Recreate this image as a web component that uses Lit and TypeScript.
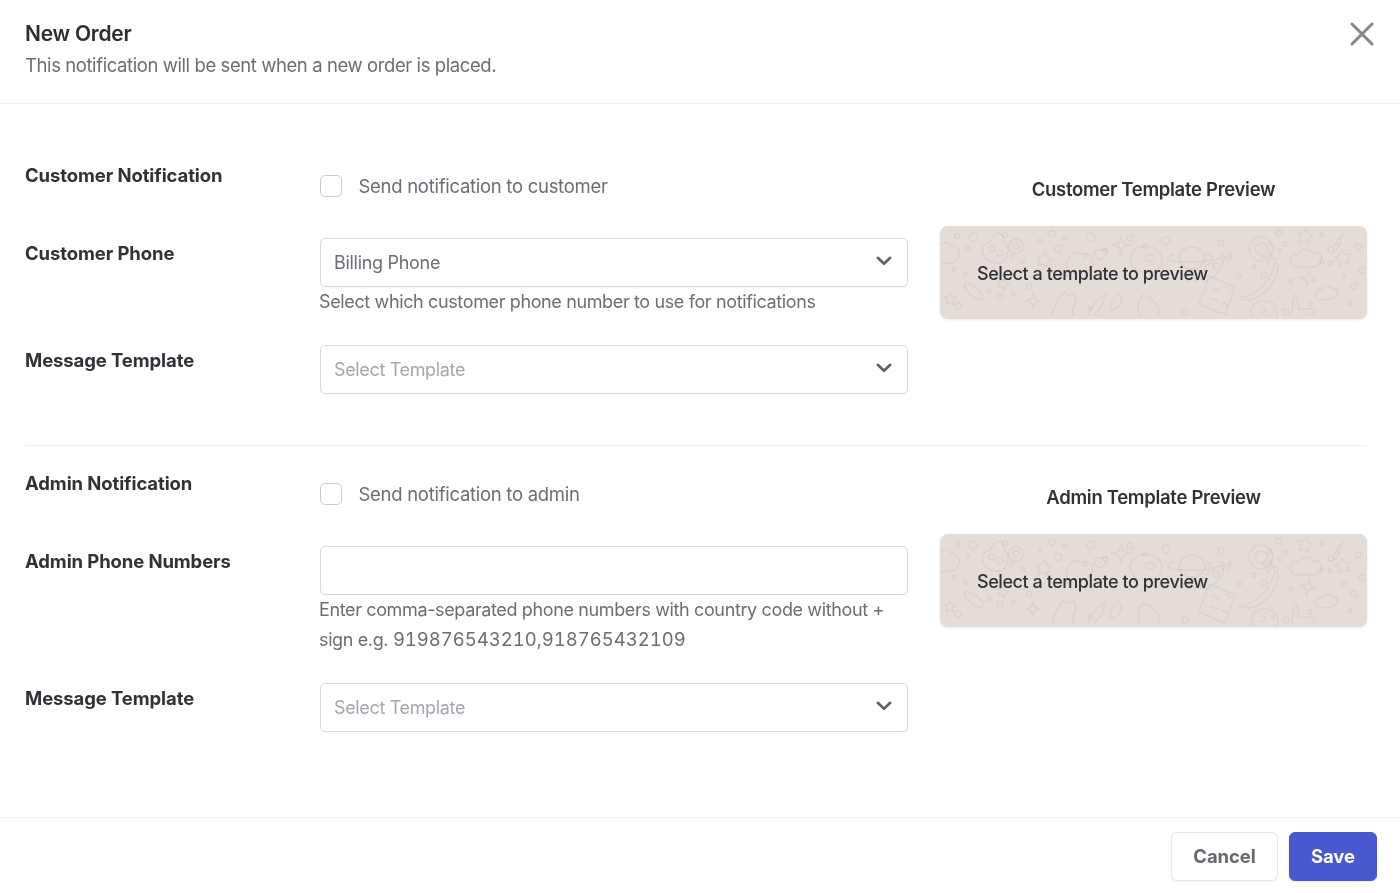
import { LitElement, html, css, svg } from "lit";
import { customElement } from "lit/decorators.js";

const circles: [number, number, number][] = [
  [17,10,2.5],[33,11,4],[65,9,2.5],[112,8,3],[125,12,2],[151,11,4],[100,15,2],[118,23,3.5],[28,22,2],[72,30,2],[83,35,2],
  [25,48,2],[14,43,2],[18,80,3],[60,71,3],[73,68,2],[49,65,2],[89,60,2.5],[128,48,2],[226,15,4],[281,17,3],[276,40,3],[339,7,3],[324,49,3],
  [314,41,2],[299,50,2],[329,18,2],[340,25,2],[345,18,2],[391,24,3],[382,36,2],[390,37,2],[404,50,2],[414,60,3],[418,21,3],[422,44,3],
  [245,86,3],[370,78,2],[346,86,3],[410,77,2],[351,55,2],[382,9,2],[282,30,2],[150,82,2],[190,12,3],[205,20,2],[165,25,2],[145,30,2],
];

function star(cx: number, cy: number, r: number, n: number, inner = 0.5, rot = 0) {
  const pts: string[] = [];
  for (let i = 0; i < n * 2; i++) {
    const rad = i % 2 ? r * inner : r;
    const a = (Math.PI * i) / n - Math.PI / 2 + rot;
    pts.push(`${(cx + rad * Math.cos(a)).toFixed(1)},${(cy + rad * Math.sin(a)).toFixed(1)}`);
  }
  return pts.join(" ");
}
const stars: [number, number, number, number, number, number][] = [
  [104,34,8,5,0.55,0.2],[181,19,9,4,0.3,0],[93,75,7,4,0.35,0],[10,73,6,5,0.5,0],[63,58,6,5,0.5,0.3],
  [329,32,7,4,0.35,0.2],[365,11,8,5,0.55,0.2],[403,32,8,5,0.55,-0.2],[368,53,8,4,0.35,0.2],[252,50,7,5,0.5,0],
];
const paths: string[] = [
  "M0 18c5-3 10-2 12 2 5 0 8 4 7 9-1 6-6 9-12 8-3 0-5 0-7 2",
  "M44 30c-4-6 0-14 7-14 0-5 5-8 9-9 3 3 5 6 4 9 4 3 5 8 3 13-1 6-6 9-11 8-5-1-10-3-12-7z",
  "M49 23a3 3 0 1 0 6 0a3 3 0 1 0-6 0M57 27a3 3 0 1 0 6 0a3 3 0 1 0-6 0",
  "M76 13a7 7 0 1 0 .1 0zM76 17a3 3 0 1 0 .1 0z",
  "M130 46c-4-2-6-8-2-12 2-6 9-9 14-6 6-2 11 2 10 8 2 5-2 9-7 9z",
  "M155 25c3-2 5 0 5 0s5-4 7 0c1 4-5 8-8 9-3-2-7-5-4-9z",
  "M193 26c4-6 16-8 23-3 7 4 8 15 2 20-8 5-21 4-26-3-3-5-2-10 1-14z",
  "M205 32a5 3 0 1 0 10 0a5 3 0 1 0-10 0",
  "M25 58c3-2 6 0 9 2 5 4 10 8 9 12-2 3-8 0-12-3-4-4-8-8-6-11z",
  "M112 90c2-10 6-18 12-24 3 4 6 4 10 0 0 5 4 9 0 14-2 3-2 7 0 10",
  "M148 90c3-9 9-17 18-22-3 7-3 12-8 17-2 2-4 4-4 6",
  "M170 84c0-6 3-13 8-16 3 1 4 4 4 6-2 6-6 11-12 10z",
  "M200 90c-4-8-2-16 3-21 3 2 5 3 7 2 2 5 8 6 9 12 0 3-1 5-2 8",
  "M262 54c-4-5 4-16 13-20 4-2 7-2 8 1 1 5-5 13-11 17-4 3-8 4-10 2z",
  "M283 35l8-9-2 6 4-2-6 7",
  "M252 21a13 11 0 1 0 .1 0z",
  "M234 28c-7 2-8 5-4 6 8 3 32 3 40 0 4-1 3-4-4-6",
  "M321 11a12 12 0 1 0 .1 0zM321 17a6 6 0 1 0 .1 0z",
  "M400 10l-5 9 6-2-6 9M405 6l-5 8",
  "M312 68c-5 3-10 4-12 2-2 3 6 6 16 2 14-6 22-20 22-33l-3-3c-2 14-12 26-23 32z",
  "M351 36c-2-5 3-9 7-7 2-6 11-7 14-2 6-2 11 3 9 8-1 4-4 6-9 6h-16c-3 0-4-2-5-5z",
  "M376 69c-1-3 2-6 5-5 2-4 8-5 11-2 5 0 7 4 5 7-1 3-4 4-8 4l-9 1c-2 0-4-2-4-5z",
  "M269 50l26 11-10 28-26-11z",
  "M272 62l8 3M285 60l6 3M270 72l8 3M282 76l6 3",
  "M314 93c-6-8-1-17 8-18 8-1 15 3 16 11 0 3-1 5-2 7",
  "M321 83c2-2 4 0 4 2-1 1-3 2-4 3M331 83c1-2 4-1 4 1 0 2-2 2-3 3",
  "M352 90c0-8 1-16 3-21 3 2 3 10 4 14 4 0 10-1 15 1 3 2 0 4-3 5",
];

@customElement("app-root")
export class AppRoot extends LitElement {
  static styles = css`
    :host {
      display: block;
      height: 893px;
      overflow: hidden;
      background: #fff;
      font-family: Inter, "Liberation Sans", sans-serif;
      font-size: 18.5px;
      line-height: 29px;
      color: #2f3237;
      filter: blur(0.4px);
    }
    .header {
      display: flex;
      justify-content: space-between;
      height: 84px;
      padding: 19px 25px 0;
      border-bottom: 1px solid #f2f2f4;
    }
    h1 {
      margin: 0;
      font-size: 21px;
      line-height: 30px;
      font-weight: 600;
      letter-spacing: -0.25px;
      color: #2b2e33;
    }
    .sub {
      margin: 2px 0 0;
      color: #6b6e77;
      line-height: 29px;
      letter-spacing: -0.41px;
    }
    .close {
      width: 26px;
      height: 26px;
      margin: 2px 0.5px 0 0;
      color: #85878e;
    }
    .body {
      padding: 56px 33px 0 25px;
      height: 713px;
      box-sizing: border-box;
    }
    .section {
      display: flex;
      justify-content: space-between;
    }
    .fields {
      width: 883px;
      display: flex;
      flex-direction: column;
      gap: 28.5px;
    }
    .row {
      display: grid;
      grid-template-columns: 294.5px 588.5px;
    }
    .label {
      padding-top: 1px;
      font-weight: 700;
      line-height: 28px;
      letter-spacing: -0.1px;
      color: #2f3237;
    }
    .check {
      display: flex;
      align-items: center;
      gap: 17px;
      height: 49.5px;
      padding-top: 2.5px;
      box-sizing: border-box;
      color: #6b6e77;
      letter-spacing: -0.28px;
    }
    .box {
      width: 22px;
      height: 22px;
      box-sizing: border-box;
      border: 1px solid #cbccd2;
      border-radius: 5px;
      background: #fff;
    }
    .select {
      display: flex;
      align-items: center;
      justify-content: space-between;
      height: 49px;
      padding: 0 15px 0 13.5px;
      box-sizing: border-box;
      border: 1px solid #d9dae0;
      border-radius: 5px;
      color: #6b6e77;
      background: #fff;
      font-size: 18px;
      letter-spacing: -0.3px;
      box-shadow: 0 1px 2px rgba(0, 0, 0, 0.03);
    }
    .select.ph {
      color: #a4a7af;
      letter-spacing: -0.35px;
    }
    .select svg {
      width: 16px;
      height: 10px;
      margin-top: -3px;
      color: #5f6269;
    }
    .help {
      margin-left: -0.5px;
      padding-bottom: 0.5px;
      color: #6b6e77;
      font-size: 18px;
      line-height: 29.4px;
      letter-spacing: -0.37px;
    }
    .help-line {
      display: block;
    }
    .nums {
      font-size: 18.5px;
      letter-spacing: 0;
      font-variant-numeric: tabular-nums;
    }
    .preview {
      width: 427px;
      padding-top: 15px;
    }
    .preview-title {
      text-align: center;
      font-weight: 600;
      line-height: 28px;
      letter-spacing: -0.3px;
      color: #2f3237;
    }
    .bubble {
      position: relative;
      height: 93px;
      margin-top: 23px;
      padding: 33px 37px 0;
      box-sizing: border-box;
      border-radius: 8px;
      background: #e4dcd6;
      box-shadow: 0 1px 3px rgba(0, 0, 0, 0.08);
      overflow: hidden;
      line-height: 28px;
      color: #2f3237;
    }
    .bubble span {
      position: relative;
      font-size: 18px;
      font-weight: 500;
      letter-spacing: -0.44px;
    }
    .doodle {
      position: absolute;
      inset: 0;
      width: 427px;
      height: 93px;
      fill: none;
      stroke: rgba(120, 108, 96, 0.08);
      stroke-width: 1.4;
    }
    .divider {
      height: 1px;
      margin: 51px 1px 22px 0;
      background: #eeeef1;
    }
    .footer {
      display: flex;
      justify-content: flex-end;
      gap: 11px;
      padding: 14px 23px 0 0;
      border-top: 1px solid #f2f2f4;
    }
    .btn {
      height: 49px;
      padding: 0 0 2px;
      box-sizing: border-box;
      border-radius: 6px;
      font: 700 18.5px Inter, "Liberation Sans", sans-serif;
      letter-spacing: -0.1px;
    }
    .cancel {
      width: 107px;
      background: #fff;
      border: 1px solid #e6e6ea;
      color: #66696f;
      box-shadow: 0 1px 2px rgba(0, 0, 0, 0.05);
    }
    .save {
      width: 88px;
      background: #4a58cf;
      border: 1px solid #4a58cf;
      color: #fff;
      box-shadow: 0 1px 2px rgba(0, 0, 0, 0.08);
    }
  `;

  private chevron() {
    return html`<svg viewBox="0 0 16 10" fill="none" stroke="currentColor" stroke-width="2.6" stroke-linecap="round" stroke-linejoin="round"><path d="M1.8 1.8 8 7.8l6.2-6"/></svg>`;
  }

  private select(text: string, ph = false) {
    return html`<div class="select ${ph ? "ph" : ""}"><span>${text}</span>${this.chevron()}</div>`;
  }

  private preview(title: string) {
    return html`<div class="preview">
      <div class="preview-title">${title}</div>
      <div class="bubble">
        <svg class="doodle" viewBox="0 0 427 93">
          ${circles.map(([x, y, r]) => svg`<circle cx=${x} cy=${y} r=${r}></circle>`)}
          ${stars.map(([x, y, r, n, i, a]) => svg`<polygon points=${star(x, y, r, n, i, a)}></polygon>`)}
          ${paths.map((d) => svg`<path d=${d}></path>`)}
        </svg>
        <span>Select a template to preview</span>
      </div>
    </div>`;
  }

  render() {
    return html`
      <div class="header">
        <div>
          <h1>New Order</h1>
          <p class="sub">This notification will be sent when a new order is placed.</p>
        </div>
        <svg class="close" viewBox="0 0 26 26" fill="none" stroke="currentColor" stroke-width="3" stroke-linecap="round"><path d="M3 3l20 20M23 3 3 23"/></svg>
      </div>
      <div class="body">
        <div class="section">
          <div class="fields">
            <div class="row">
              <div class="label">Customer Notification</div>
              <div class="check"><span class="box"></span><span>Send notification to customer</span></div>
            </div>
            <div class="row">
              <div class="label">Customer Phone</div>
              <div>
                ${this.select("Billing Phone")}
                <div class="help">Select which customer phone number to use for notifications</div>
              </div>
            </div>
            <div class="row">
              <div class="label">Message Template</div>
              ${this.select("Select Template", true)}
            </div>
          </div>
          ${this.preview("Customer Template Preview")}
        </div>
        <div class="divider"></div>
        <div class="section">
          <div class="fields">
            <div class="row">
              <div class="label">Admin Notification</div>
              <div class="check"><span class="box"></span><span>Send notification to admin</span></div>
            </div>
            <div class="row">
              <div class="label">Admin Phone Numbers</div>
              <div>
                <div class="select"></div>
                <div class="help"><span class="help-line">Enter comma-separated phone numbers with country code without +</span><span>sign e.g. </span><span class="nums">919876543210,918765432109</span></div>
              </div>
            </div>
            <div class="row">
              <div class="label">Message Template</div>
              ${this.select("Select Template", true)}
            </div>
          </div>
          ${this.preview("Admin Template Preview")}
        </div>
      </div>
      <div class="footer">
        <button class="btn cancel">Cancel</button>
        <button class="btn save">Save</button>
      </div>
    `;
  }
}
